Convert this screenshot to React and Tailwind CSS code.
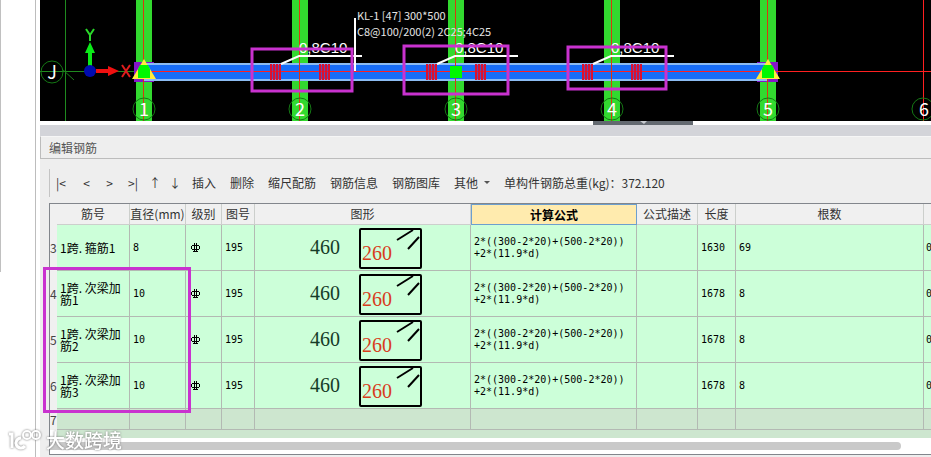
import { useState } from "react";
import clsx from "clsx";

const spans = [
  { x: 104, label: "1" },
  { x: 260, label: "2" },
  { x: 416, label: "3" },
  { x: 572, label: "4" },
  { x: 728, label: "5" },
];

const marks = [
  { x: 212, y: 49, w: 100, h: 42 },
  { x: 364, y: 46, w: 104, h: 48 },
  { x: 528, y: 47, w: 98, h: 42 },
];

const columns = [
  { title: "筋号", width: "w-[73px]" },
  { title: "直径(mm)", width: "w-[56px]" },
  { title: "级别", width: "w-[36px]" },
  { title: "图号", width: "w-[33px]" },
  { title: "图形", width: "w-[216px]" },
  { title: "计算公式", width: "w-[166px]" },
  { title: "公式描述", width: "w-[61px]" },
  { title: "长度", width: "w-[38px]" },
  { title: "根数", width: "w-[188px]" },
];

const rows = [
  { no: 3, name: "1跨. 箍筋1", d: 8, length: 1630, count: 69 },
  { no: 4, name: "1跨. 次梁加筋1", d: 10, length: 1678, count: 8 },
  { no: 5, name: "1跨. 次梁加筋2", d: 10, length: 1678, count: 8 },
  { no: 6, name: "1跨. 次梁加筋3", d: 10, length: 1678, count: 8 },
];

const navButtons = [
  { text: "|<", label: "第一条", width: "w-[14px]" },
  { text: "<", label: "上一条", width: "w-[9px]" },
  { text: ">", label: "下一条", width: "w-[9px]" },
  { text: ">|", label: "最后一条", width: "w-[10px]" },
  { text: "↑", label: "上移", width: "w-[6px]" },
  { text: "↓", label: "下移", width: "w-[6px]" },
];

const actions = ["插入", "删除", "缩尺配筋", "钢筋信息", "钢筋图库"];

// Bars for one group of extra stirrups
function Stirrups({ x }) {
  return (
    <g fill="#dc1030">
      <rect x={x} y="64" width="11" height="16" fillOpacity="0.35" />
      {[0, 3, 6, 9].map((dx) => (
        <rect key={dx} x={x + dx} y="64" width="2" height="16" />
      ))}
    </g>
  );
}

function Support({ x }) {
  return (
    <g>
      <path d={`M${x} 59L${x + 12} 79H${x - 12}Z`} fill="#ffee3c" />
      <path d={`M${x - 4} 65h8l2 4v9h-12v-9z`} fill="#00f800" />
    </g>
  );
}

function BeamView() {
  return (
    <svg
      className="block h-[121px] w-full bg-black font-['Noto_Sans_CJK_SC',sans-serif]"
      role="img"
      aria-label="KL-1"
    >
      {spans.map((s) => (
        <rect key={s.label} x={s.x - 8} y="0" width="16" height="121" fill="#32d92f" />
      ))}

      {/* Axis lines */}
      <g shapeRendering="crispEdges">
        <rect x="25" y="0" width="1" height="121" fill="#1f8a1f" />
        <rect x="0" y="71" width="96" height="1" fill="#1f8a1f" />
        <rect x="94" y="62" width="20" height="20" fill="#8416c8" />
        <rect x="717" y="62" width="21" height="20" fill="#8416c8" />
        <rect x="104" y="63" width="624" height="18" fill="#8cbcf2" />
        <rect x="104" y="65" width="624" height="14" fill="#176df8" />
        <rect x="96" y="71" width="100%" height="1" fill="#ff2020" />
        {spans.map((s) => (
          <rect key={s.label} x={s.x - 1} y="0" width="1" height="121" fill="#d83810" />
        ))}
        <rect x="883" y="0" width="1" height="121" fill="#ff2020" />
      </g>
      <path d="M22 69L34 80" stroke="#1c7a1c" fill="none" />

      <Support x={104} />
      <Support x={728} />
      <rect x="410" y="66" width="12" height="12" fill="#00f800" />

      {/* Grid bubbles */}
      <g fill="none" stroke="#157815">
        {spans.map((s) => (
          <circle key={s.label} cx={s.x} cy="109" r="11" />
        ))}
        <circle cx="883" cy="109" r="11" />
        <circle cx="12" cy="72" r="11" />
      </g>
      <g fill="#fff" fontSize="18" textAnchor="middle">
        {spans.map((s) => (
          <text key={s.label} x={s.x} y="116">{s.label}</text>
        ))}
        <text x="884" y="116">6</text>
        <text x="12" y="79">J</text>
      </g>

      {/* Coordinate axes */}
      <path d="M48 66V53h-3l5-11l5 11h-3V66z" fill="#0bea18" />
      <path d="M56 69h12v-3l11 5l-11 5v-3H56z" fill="#f01010" />
      <circle cx="50" cy="71" r="6" fill="#000bb0" />
      <path d="M46 29l4 6l4-6M50 35v6" stroke="#2ad92a" strokeWidth="2" fill="none" />
      <path d="M82 65l8 12M90 65l-8 12" stroke="#e01c1c" strokeWidth="2" fill="none" />

      {[0, 156, 312].map((dx) => (
        <g key={dx}>
          <Stirrups x={230 + dx} />
          <Stirrups x={279 + dx} />
          <path d={`M${241 + dx} 64l18-8h63`} stroke="#fff" strokeWidth="2" fill="none" />
          <text x={259 + dx} y="53" fill="#fff" fontSize="15" fontFamily="Liberation Sans">
            0,8C10
          </text>
        </g>
      ))}

      <rect x="314" y="18" width="2" height="53" fill="#fff" />
      <g fill="#e4e4e4" fontSize="11">
        <text x="317" y="20">KL-1 [47] 300*500</text>
        <text x="317" y="36">C8@100/200(2) 2C25;4C25</text>
      </g>

      <g fill="none" stroke="#c932cf" strokeWidth="3">
        {marks.map((m) => (
          <rect key={m.x} x={m.x} y={m.y} width={m.w} height={m.h} />
        ))}
      </g>
    </svg>
  );
}

function ShapeSketch() {
  return (
    <svg className="block h-[45px] w-[215px]" role="img" aria-label="460 x 260">
      <text x="55" y="29" fontSize="20" fontFamily="Liberation Serif" fill="#163c28">460</text>
      <text x="107" y="35" fontSize="20" fontFamily="Liberation Serif" fill="#d83c1c">260</text>
      <rect x="105" y="4" width="61" height="39" rx="1" fill="none" stroke="#000" strokeWidth="2" />
      <path d="M142 15L158 5M153 24L164 12" fill="none" stroke="#000" strokeWidth="2" />
    </svg>
  );
}

// Bar grade symbol
function GradeIcon() {
  return (
    <svg className="block h-[9px] w-[9px]" role="img" aria-label="HRB400">
      <path d="M3 0h1v9h-1zM5 0h1v9h-1zM1 2h7v1h-7zM1 6h7v1h-7zM0 3h1v3h-1zM8 3h1v3h-1zM2 8h5v1h-5z" />
    </svg>
  );
}

function RebarTable({ active, onSelect }) {
  const cell = "border-r border-b border-[#b3b9b3] p-0 pl-[3px]";
  const mono = "font-['DejaVu_Sans_Mono',monospace] text-[10px] leading-3";

  return (
    <table className="w-full table-fixed border-separate border-spacing-0 text-left">
      <colgroup>
        <col className="w-[7px]" />
        {columns.map((c) => (
          <col key={c.title} className={c.width} />
        ))}
        <col />
      </colgroup>
      <thead>
        <tr className="h-[21px] bg-[#f0f0f0]">
          <th className="p-0" />
          {columns.map((c) => (
            <th
              key={c.title}
              className={clsx(
                "overflow-hidden p-0",
                active === c.title
                  ? "border border-[#6d9fce] bg-[#ffebae] font-bold text-black"
                  : "border-r border-b border-[#cccfcc] font-normal"
              )}
            >
              <button
                onClick={() => onSelect(c.title)}
                className="block w-full text-center leading-[18px] whitespace-nowrap"
              >
                {c.title}
              </button>
            </th>
          ))}
          <th className="border-b border-[#cccfcc] p-0" />
        </tr>
      </thead>
      <tbody className="bg-[#ccffd9] text-black">
        {rows.map((r) => (
          <tr key={r.no} className="h-[46px]">
            <th className="bg-[#f0f0f0] p-0 font-normal text-[#444]">{r.no}</th>
            <td className={clsx(cell, "leading-3")}>{r.name}</td>
            <td className={clsx(cell, mono)}>{r.d}</td>
            <td className="border-r border-b border-[#b3b9b3] p-0 pl-[5px]">
              <GradeIcon />
            </td>
            <td className={clsx(cell, mono)}>195</td>
            <td className="border-r border-b border-[#b3b9b3] p-0">
              <ShapeSketch />
            </td>
            <td className={clsx(cell, mono, "whitespace-nowrap")}>
              2*((300-2*20)+(500-2*20))
              <br />
              +2*(11.9*d)
            </td>
            <td className={cell} />
            <td className={clsx(cell, mono)}>{r.length}</td>
            <td className={clsx(cell, mono)}>{r.count}</td>
            <td className={clsx("overflow-hidden border-b border-[#b3b9b3] p-0 pl-[2px]", mono)}>0</td>
          </tr>
        ))}
        <tr className="h-[21px] bg-[#cde6cf]">
          <th className="bg-[#f0f0f0] p-0 font-normal text-[#444]">7</th>
          {columns.map((c) => (
            <td key={c.title} className={cell} />
          ))}
          <td className="border-b border-[#b3b9b3] p-0" />
        </tr>
      </tbody>
    </table>
  );
}

function Watermark() {
  return (
    <div className="absolute bottom-[3px] left-2 flex items-center gap-1 text-white drop-shadow-[0_0_1px_#777]">
      <svg className="h-[22px] w-[34px]" fill="none" stroke="currentColor" strokeWidth="3" aria-hidden="true">
        <path d="M1 5h3v14M17 17a5 5 0 1 1-4-8" />
        <circle cx="19" cy="6" r="4" strokeWidth="2" />
        <circle cx="28" cy="6" r="4" strokeWidth="2" />
      </svg>
      <span className="text-[19px] leading-7 font-medium">大数跨境</span>
    </div>
  );
}

export default function App() {
  const [active, setActive] = useState("计算公式");

  return (
    <div className="relative flex min-h-screen overflow-hidden bg-white font-['Noto_Sans_CJK_SC',sans-serif] text-xs text-[#333]">
      <aside className="w-9 shrink-0 border-r border-[#bdbdbd]">
        <div className="h-[272px] w-px bg-[#c0c0c0]" />
      </aside>

      <main className="ml-1 flex min-w-0 flex-1 flex-col bg-[#eeeeee]">
        <BeamView />
        <div className="flex h-1 bg-white pl-[553px]">
          <div className="flex w-[100px] justify-center bg-[#636970]">
            <svg className="h-1 w-[7px]" fill="#c8cbd0" aria-hidden="true">
              <path d="M0 0h7L4 3z" />
            </svg>
          </div>
        </div>
        <div className="h-[11px] bg-[#d3d4d9]" />

        <h2 className="border-t border-b border-l border-t-[#f6f6f6] border-b-[#bcbcbc] border-l-[#bcbcbc] pl-2 leading-[21px] text-[#555]">
          编辑钢筋
        </h2>

        <div className="flex h-11 items-center pt-1 pl-[9px]">
          <div className="flex h-7 items-center gap-[14px] border-l border-[#c4c4c4] pl-1 whitespace-nowrap">
            {navButtons.map((b) => (
              <button key={b.label} aria-label={b.label} className={clsx("flex justify-center", b.width)}>
                {b.text}
              </button>
            ))}
            {actions.map((a) => (
              <button key={a}>{a}</button>
            ))}
            <button className="flex items-center gap-1.5">
              其他
              <svg className="h-1 w-[6px]" fill="#555" aria-hidden="true">
                <path d="M0 0h6L3 3z" />
              </svg>
            </button>
            <span>单构件钢筋总重(kg)：372.120</span>
          </div>
        </div>

        <section className="relative ml-[9px] border-t border-b border-l border-[#82868c] bg-white">
          <div className="overflow-hidden">
            <RebarTable active={active} onSelect={setActive} />
          </div>
          <div className="ml-[7px] h-2 bg-[#cde6cf]" />
          <div className="py-1 pr-[30px]">
            <div className="h-2 rounded-r-full bg-[#c9c9c9]" />
          </div>
          <div className="pointer-events-none absolute top-[63px] -left-[7px] h-[146px] w-[148px] border-3 border-[#c932cf]" />
        </section>
      </main>

      <Watermark />
    </div>
  );
}
